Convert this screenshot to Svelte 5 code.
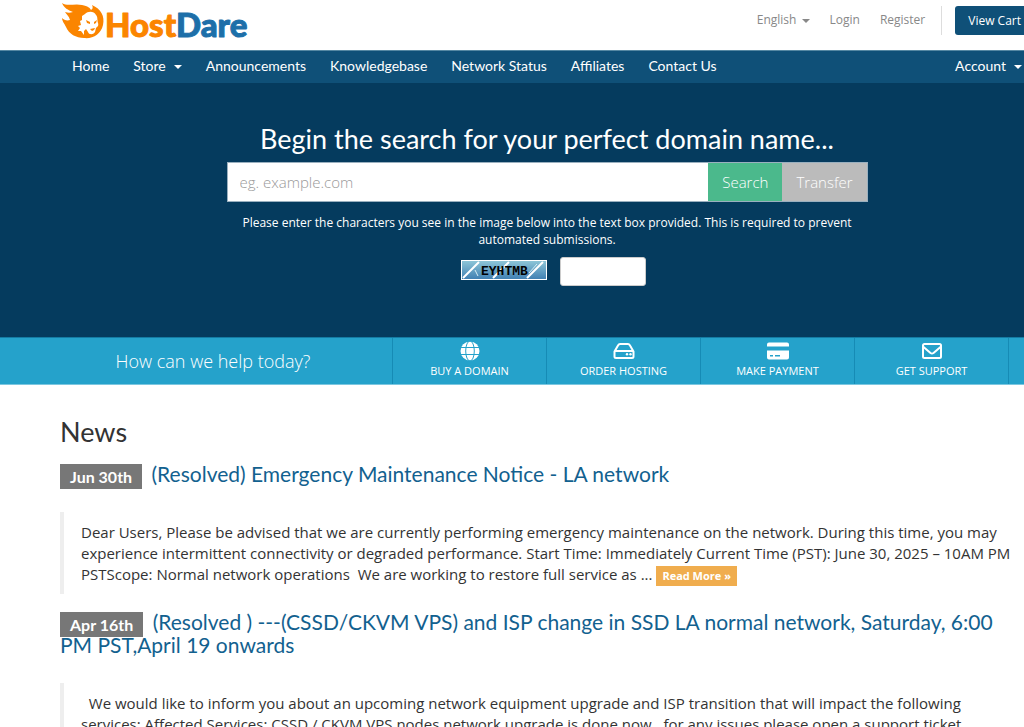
<script>
  const navItems = [
    { label: 'Home' },
    { label: 'Store', caret: true },
    { label: 'Announcements' },
    { label: 'Knowledgebase' },
    { label: 'Network Status' },
    { label: 'Affiliates' },
    { label: 'Contact Us' },
  ];

  const shortcuts = [
    { label: 'Buy a Domain', icon: 'globe' },
    { label: 'Order Hosting', icon: 'server' },
    { label: 'Make Payment', icon: 'card' },
    { label: 'Get Support', icon: 'mail' },
  ];

  let domain = $state('');
  let captcha = $state('');
</script>

<div class="page">
  <div class="canvas">
    <header class="header">
      <a class="logo" href="#home" aria-label="HostDare">
        <svg width="192" height="44" viewBox="0 0 192 44">
          <path
            fill="#fb8500"
            d="M2 3 C8 7 14 3 22 5 C28 6 30 8 31 10 C33 9 33 7 32 5 C41 9 45 16 43 25 C41 34 33 39 24 38 C16 38 9 34 6 27 C4 23 2 21 2 18 C4 20 7 21 10 20 C9 16 6 14 5 12 C8 13 10 13 13 12 C8 10 4 8 2 3 Z"
          />
          <path
            fill="#fff"
            d="M25 14 C28 11 34 11 36 15 C38 17 37 20 38 23 C39 26 37 27 36 28 L35 32 C33 35 29 35 28 32 L26 29 L24 31 L24 35 L21 31 L18 31 L20 28 L18 26 L21 25 L20 21 L22 20 L22 16 Z"
          />
          <path
            fill="#fb8500"
            d="M26 20 L30 22 L30 24 L27 23 Z M34 22 L37 20 L36 23 L34 24 Z M30 29 L35 28 L34 30 L32 31 Z"
          />
          <text x="45" y="37" class="logo-host">Host</text>
          <text x="116" y="37" class="logo-dare">Dare</text>
        </svg>
      </a>
      <div class="top-nav">
        <button type="button" class="top-link">English <i class="caret"></i></button>
        <a class="top-link" href="#login">Login</a>
        <a class="top-link" href="#register">Register</a>
        <div class="cart">
          <a class="cart-button" href="#cart">View Cart</a>
        </div>
      </div>
    </header>

    <nav class="main-nav">
      <ul>
        {#each navItems as item}
          <li>
            <a href="#nav">{item.label}{#if item.caret}<i class="caret"></i>{/if}</a>
          </li>
        {/each}
      </ul>
      <a class="account" href="#account">Account<i class="caret"></i></a>
    </nav>

    <section class="hero">
      <form class="search" onsubmit={(e) => e.preventDefault()}>
        <h2>Begin the search for your perfect domain name...</h2>
        <div class="search-group">
          <input
            type="text"
            aria-label="Domain name"
            placeholder="eg. example.com"
            bind:value={domain}
          />
          <button type="submit" class="search-button">Search</button>
          <button type="submit" class="transfer-button">Transfer</button>
        </div>
        <p>
          Please enter the characters you see in the image below into the text box provided. This is
          required to prevent automated submissions.
        </p>
        <div class="captcha">
          <svg width="86" height="20" viewBox="0 0 86 20" role="img" aria-label="Security code">
            <defs>
              <linearGradient id="sky" x1="0" y1="0" x2="0" y2="1">
                <stop offset="0" stop-color="#8fc7d8" />
                <stop offset="1" stop-color="#3f7fb2" />
              </linearGradient>
            </defs>
            <rect x="0.5" y="0.5" width="85" height="19" fill="url(#sky)" stroke="#fff" />
            <path
              d="M2 18 L18 2 M32 18 L48 2 M66 18 L82 2"
              stroke="#fff"
              stroke-width="2"
            />
            <path d="M14 10 L17 16 M68 13 L76 4" stroke="#d8eef5" />
            <text x="20" y="15">EYHTMB</text>
          </svg>
          <input type="text" aria-label="Characters in the image" bind:value={captcha} />
        </div>
      </form>
    </section>

    <section class="help-bar">
      <p>How can we help today?</p>
      <ul>
        {#each shortcuts as item}
          <li>
            <a href="#help">
              <svg width="22" height="20" viewBox="0 0 22 20" aria-hidden="true">
                {#if item.icon === 'globe'}
                  <circle cx="11" cy="10" r="9.5" fill="#fff" />
                  <g fill="none" stroke="#25a2cb" stroke-width="1">
                    <ellipse cx="11" cy="10" rx="4.3" ry="10" />
                    <path d="M1 6.5 H21 M1 13.5 H21" />
                  </g>
                {:else if item.icon === 'server'}
                  <path
                    d="M1.5 10.5 L5.3 4 Q5.8 3 7 3 H15 Q16.2 3 16.7 4 L20.5 10.5 V15.5 Q20.5 17 19 17 H3 Q1.5 17 1.5 15.5 Z M2 10 H20"
                    fill="none"
                    stroke="#fff"
                    stroke-width="2"
                    stroke-linejoin="round"
                  />
                  <circle cx="14" cy="13.3" r="1.2" fill="#fff" />
                  <circle cx="17.5" cy="13.3" r="1.2" fill="#fff" />
                {:else if item.icon === 'card'}
                  <path
                    fill="#fff"
                    fill-rule="evenodd"
                    d="M2 1.5 H20 Q22 1.5 22 3.5 V5.5 H0 V3.5 Q0 1.5 2 1.5 Z M0 9.5 H22 V16.5 Q22 18.5 20 18.5 H2 Q0 18.5 0 16.5 Z M3 14 V15.5 H6 V14 Z M8 14 V15.5 H13 V14 Z"
                  />
                {:else}
                  <g fill="none" stroke="#fff" stroke-width="2" stroke-linejoin="round">
                    <rect x="2" y="3" width="18" height="14" rx="1.5" />
                    <path d="M2.5 6 L9.5 12 Q11 13 12.5 12 L19.5 6" />
                  </g>
                {/if}
              </svg>
              <span>{item.label}</span>
            </a>
          </li>
        {/each}
      </ul>
    </section>

    <main class="news">
      <h1>News</h1>

      <article>
        <h3>
          <span class="date">Jun 30th</span>
          <a href="#news-1">(Resolved) Emergency Maintenance Notice - LA network</a>
        </h3>
        <blockquote>
          Dear Users, Please be advised that we are currently performing emergency maintenance on the
          network. During this time, you may experience intermittent connectivity or degraded
          performance. Start Time: Immediately Current Time (PST): June 30, 2025 – 10AM PM PSTScope:
          Normal network operations&nbsp; We are working to restore full service as ...
          <a class="read-more" href="#news-1">Read More »</a>
        </blockquote>
      </article>

      <article>
        <h3>
          <span class="date">Apr 16th</span>
          <a href="#news-2"
            >(Resolved ) ---(CSSD/CKVM VPS) and ISP change in SSD LA normal network, Saturday, 6:00
            PM PST,April 19 onwards</a
          >
        </h3>
        <blockquote>
          &nbsp; We would like to inform you about an upcoming network equipment upgrade and ISP
          transition that will impact the following services: Affected Services: CSSD / CKVM VPS
          nodes network upgrade is done now.&nbsp; for any issues please open a support ticket
        </blockquote>
      </article>
    </main>
  </div>
</div>

<style>
  :global(body) {
    background: #fff;
    color: #333;
    font-family: 'Open Sans', sans-serif;
    font-size: 12px;
  }

  .page {
    height: 100vh;
    overflow: hidden;
  }

  /* the layout runs past the right edge of the window */
  .canvas {
    margin-right: -70px;
  }

  .page * {
    box-sizing: border-box;
  }

  a {
    color: inherit;
    text-decoration: none;
  }

  ul {
    display: flex;
    margin: 0;
    padding: 0;
    list-style: none;
  }

  button {
    border: 0;
    font: inherit;
    cursor: pointer;
  }

  .caret {
    display: inline-block;
    border: 4px solid transparent;
    border-top-color: currentColor;
    border-bottom: 0;
    vertical-align: middle;
  }

  .header {
    display: flex;
    justify-content: space-between;
    height: 50px;
    padding: 0 60px;
  }

  .logo svg {
    display: block;
  }

  .logo text {
    font: 900 33px Lato, sans-serif;
    stroke-width: 1;
    stroke-linejoin: round;
  }

  .logo .logo-host {
    fill: #fb8500;
    stroke: #fb8500;
  }

  .logo .logo-dare {
    fill: #1d6fa9;
    stroke: #1d6fa9;
  }

  .top-nav {
    display: flex;
    align-items: flex-start;
    gap: 20px;
    padding-top: 6px;
  }

  .top-link {
    padding: 0;
    background: none;
    color: #888;
    line-height: 28px;
  }

  .top-link .caret {
    margin-left: 2px;
  }

  .cart {
    margin-left: -4px;
    padding-left: 13px;
    border-left: 1px solid #ddd;
  }

  .cart-button {
    display: block;
    padding: 0 13px;
    border-radius: 3px;
    background: #0f5078;
    color: #fff;
    line-height: 29px;
  }

  .main-nav {
    display: flex;
    justify-content: space-between;
    padding: 0 60px 2px;
    border-top: 1px solid #5588a3;
    background: #0f5078;
    color: #fff;
    font-family: Lato, sans-serif;
    font-size: 14px;
    line-height: 30px;
  }

  .main-nav a {
    display: block;
    padding: 0 12px;
  }

  .main-nav .caret {
    margin-left: 8px;
  }

  .hero {
    padding: 39px 60px 51px;
    background: #053b5e;
    color: #fff;
  }

  .search {
    max-width: 641px;
    margin: 0 auto;
    text-align: center;
  }

  .search h2 {
    margin: 0;
    font: 400 27px/34px Lato, sans-serif;
  }

  .search-group {
    display: flex;
    height: 40px;
    margin-top: 6px;
    border: 1px solid #9ab0bf;
  }

  .search-group input {
    flex: 1;
    min-width: 0;
    padding: 0 12px;
    border: 0;
    background: #fff;
    font: 300 15px 'Open Sans', sans-serif;
  }

  .search-group input::placeholder {
    color: #999;
  }

  .search-group button {
    padding: 0 14px;
    color: #fff;
    font-size: 15px;
    font-weight: 300;
  }

  .search-group .search-button {
    background: #4bb98c;
  }

  .search-group .transfer-button {
    background: #bbb;
  }

  .search p {
    margin: 12px 0 9px;
    line-height: 17px;
  }

  .captcha {
    display: flex;
    align-items: flex-start;
    justify-content: center;
    gap: 13px;
    padding-left: 12px;
  }

  .captcha svg {
    margin-top: 3px;
  }

  .captcha text {
    font: 700 13px 'Liberation Mono', monospace;
  }

  .captcha input {
    width: 86px;
    height: 29px;
    padding: 0 8px;
    border: 1px solid #ccc;
    border-radius: 3px;
    background: #fff;
  }

  .help-bar {
    display: flex;
    padding-left: 34px;
    border-top: 1px solid #157ba3;
    border-bottom: 1px solid #7cc7e0;
    background: #25a2cb;
    color: #fff;
  }

  .help-bar p {
    width: 358px;
    margin: 0;
    font-size: 18px;
    font-weight: 300;
    line-height: 46px;
    text-align: center;
  }

  .help-bar li {
    width: 154px;
    border-left: 1px solid #168bb5;
  }

  .help-bar li:last-child {
    width: 155px;
    border-right: 1px solid #168bb5;
  }

  .help-bar a {
    display: flex;
    flex-direction: column;
    align-items: center;
    padding-top: 3px;
    font-size: 11px;
    line-height: 20px;
    text-transform: uppercase;
  }

  .news {
    padding: 31px 76px 0 60px;
  }

  .news h1 {
    margin: 0 0 14px;
    font: 400 27px/32px Lato, sans-serif;
  }

  .news h3 {
    margin: 0;
    color: #12618f;
    font: 400 21px/23px Lato, sans-serif;
  }

  .date {
    display: inline-block;
    position: relative;
    top: 1px;
    height: 25px;
    margin: -4px 4px -4px 0;
    padding: 0 10px;
    background: #777;
    color: #fff;
    font-size: 16px;
    font-weight: 700;
    line-height: 25px;
  }

  .news blockquote {
    margin: 27px 0 16px;
    padding: 10px 0 8px 17px;
    border-left: 4px solid #eee;
    font-size: 15px;
    line-height: 21px;
  }

  .read-more {
    display: inline-block;
    padding: 0 6px;
    background: #f0ad4e;
    color: #fff;
    font-size: 11px;
    font-weight: 700;
    line-height: 20px;
  }
</style>
